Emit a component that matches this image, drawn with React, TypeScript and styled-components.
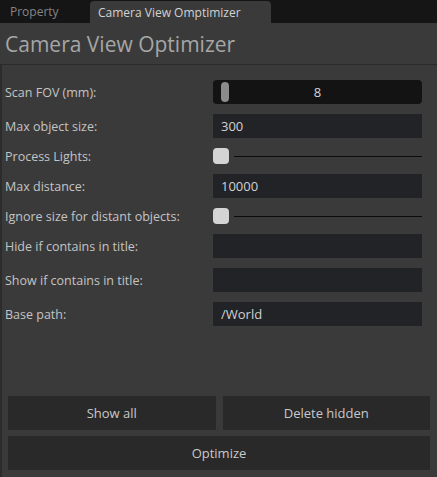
import React from "react";
import styled, { createGlobalStyle } from "styled-components";

const Global = createGlobalStyle`
  html, body { margin: 0; padding: 0; background: #151515; }
  * { box-sizing: border-box; }
`;

const Window = styled.div`
  width: 437px;
  height: 477px;
  display: flex;
  flex-direction: column;
  background: #3a3a3a;
  font-family: "Open Sans", "Noto Sans", sans-serif;
  overflow: hidden;
`;

const TabBar = styled.div`
  height: 23px;
  background: #151515;
  display: flex;
  align-items: flex-end;
`;

const Tab = styled.div<{ $active?: boolean }>`
  height: ${(p) => (p.$active ? "22px" : "23px")};
  display: flex;
  align-items: center;
  font-size: 12px;
  padding: 0 ${(p) => (p.$active ? "29px 0 8px" : "0 0 10px")};
  width: ${(p) => (p.$active ? "181px" : "90px")};
  color: ${(p) => (p.$active ? "#d2d2d2" : "#858585")};
  background: ${(p) => (p.$active ? "#3a3a3a" : "transparent")};
  border-radius: 4px 4px 0 0;
  white-space: nowrap;
`;

const Header = styled.div`
  height: 42px;
  display: flex;
  align-items: center;
  padding-left: 5px;
  font-size: 21px;
  color: #a6a6a6;
  border-bottom: 1px solid #2a2a2a;
`;

const Body = styled.div`
  flex: 1;
  display: flex;
  flex-direction: column;
  border-left: 2px solid #2c2c2c;
  padding: 15px 0 7px 0;
`;

const Form = styled.div`
  display: flex;
  flex-direction: column;
  gap: 10px;
  padding: 0 15px 0 3px;
`;

const Row = styled.div<{ $h: number }>`
  height: ${(p) => p.$h}px;
  display: flex;
  align-items: center;
`;

const Label = styled.div`
  width: 208px;
  flex: none;
  font-size: 12.5px;
  color: #c4c4c4;
  white-space: nowrap;
`;

const Field = styled.div`
  flex: 1;
  height: 24px;
  background: #222326;
  display: flex;
  align-items: center;
  padding-left: 8px;
  font-size: 13px;
  color: #d2d2d2;
`;

const SliderField = styled.div`
  flex: 1;
  height: 24px;
  background: #131313;
  border-radius: 4px;
  position: relative;
  display: flex;
  align-items: center;
  justify-content: center;
  font-size: 13px;
  color: #d6d6d6;
`;

const SliderThumb = styled.div`
  position: absolute;
  left: 8px;
  top: 2px;
  width: 8px;
  height: 20px;
  border-radius: 4px;
  background: #8c8c8c;
`;

const Toggle = styled.div`
  flex: 1;
  display: flex;
  align-items: center;
  gap: 5px;
`;

const ToggleKnob = styled.div`
  width: 16px;
  height: 16px;
  border-radius: 4px;
  background: #d4d4d4;
  flex: none;
`;

const ToggleLine = styled.div`
  flex: 1;
  height: 1px;
  background: #0c0c0c;
`;

const Spacer = styled.div`
  flex: 1;
`;

const Buttons = styled.div`
  display: grid;
  grid-template-columns: 1fr 1fr;
  gap: 6px 7px;
  padding: 0 7px 0 6px;
`;

const Button = styled.div<{ $wide?: boolean }>`
  grid-column: ${(p) => (p.$wide ? "1 / span 2" : "auto")};
  height: 34px;
  background: #292929;
  display: flex;
  align-items: center;
  justify-content: center;
  font-size: 13px;
  color: #c8c8c8;
`;

type RowDef =
  | { label: string; kind: "slider"; value: string }
  | { label: string; kind: "field"; value: string }
  | { label: string; kind: "toggle" };

const rows: RowDef[] = [
  { label: "Scan FOV (mm):", kind: "slider", value: "8" },
  { label: "Max object size:", kind: "field", value: "300" },
  { label: "Process Lights:", kind: "toggle" },
  { label: "Max distance:", kind: "field", value: "10000" },
  { label: "Ignore size for distant objects:", kind: "toggle" },
  { label: "Hide if contains in title:", kind: "field", value: "" },
  { label: "Show if contains in title:", kind: "field", value: "" },
  { label: "Base path:", kind: "field", value: "/World" },
];

export default function App() {
  return (
    <>
      <Global />
      <Window>
        <TabBar>
          <Tab>Property</Tab>
          <Tab $active>Camera View Omptimizer</Tab>
        </TabBar>
        <Header>Camera View Optimizer</Header>
        <Body>
          <Form>
            {rows.map((r) => (
              <Row key={r.label} $h={r.kind === "toggle" ? 16 : 24}>
                <Label>{r.label}</Label>
                {r.kind === "slider" && (
                  <SliderField>
                    <SliderThumb />
                    {r.value}
                  </SliderField>
                )}
                {r.kind === "field" && <Field>{r.value}</Field>}
                {r.kind === "toggle" && (
                  <Toggle>
                    <ToggleKnob />
                    <ToggleLine />
                  </Toggle>
                )}
              </Row>
            ))}
          </Form>
          <Spacer />
          <Buttons>
            <Button>Show all</Button>
            <Button>Delete hidden</Button>
            <Button $wide>Optimize</Button>
          </Buttons>
        </Body>
      </Window>
    </>
  );
}
